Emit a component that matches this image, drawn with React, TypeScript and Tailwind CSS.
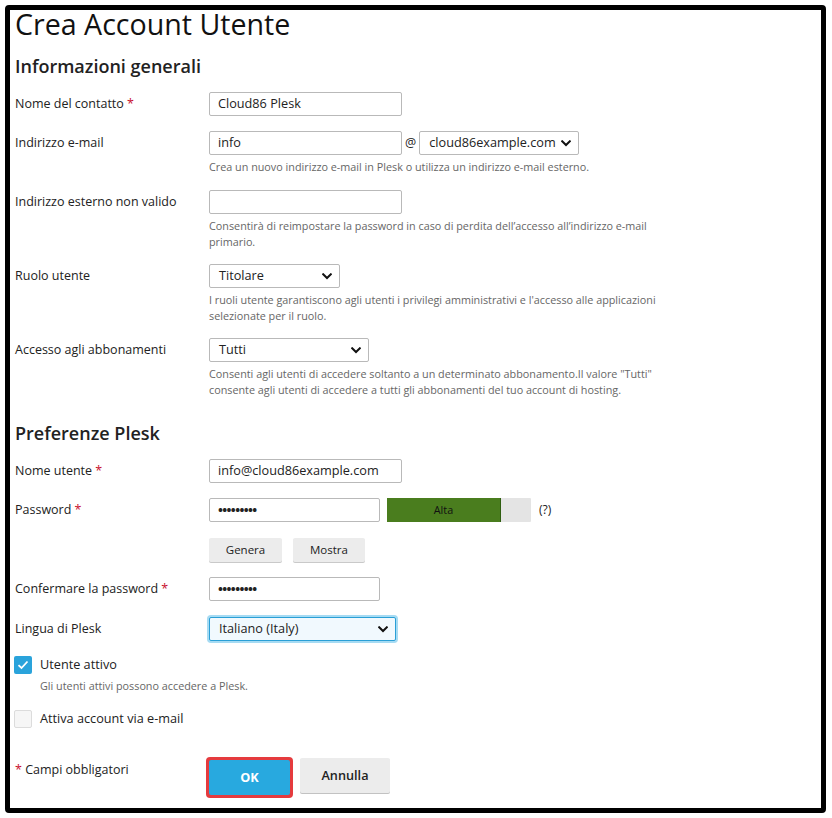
import React from "react";

const font = { fontFamily: '"Open Sans", "Noto Sans", sans-serif' };

function Chevron() {
  return (
    <svg width="10" height="7" viewBox="0 0 10 7" className="shrink-0">
      <path d="M1.2 1.3 L5 5 L8.8 1.3" fill="none" stroke="#111" strokeWidth="2" strokeLinecap="square" />
    </svg>
  );
}

function Req() {
  return <span className="text-[#c8102e]"> *</span>;
}

function Input({ w, value, dots }: { w: string; value?: string; dots?: boolean }) {
  return (
    <div
      className={`${w} h-[24px] border border-[#b9b9b9] rounded-[2px] bg-white flex items-center px-[8px] text-[12.7px] text-[#222] shrink-0`}
    >
      {dots ? <span className="text-[13px] font-bold tracking-[-0.6px] leading-none">•••••••••</span> : value}
    </div>
  );
}

function Select({ w, value }: { w: string; value: string }) {
  return (
    <div
      className={`${w} h-[24px] border border-[#b9b9b9] rounded-[2px] bg-white flex items-center justify-between pl-[9px] pr-[7px] text-[12.7px] text-[#222] shrink-0`}
    >
      <span>{value}</span>
      <Chevron />
    </div>
  );
}

function Help({ children }: { children: React.ReactNode }) {
  return <div className="mt-[4px] text-[10.8px] leading-[16px] text-[#666]">{children}</div>;
}

function Row({
  label,
  children,
  mt,
}: {
  label: React.ReactNode;
  children: React.ReactNode;
  mt: string;
}) {
  return (
    <div className={`flex ${mt}`}>
      <div className="w-[194px] shrink-0 text-[12.5px] leading-[24px] text-[#222]">{label}</div>
      <div className="flex flex-col">{children}</div>
    </div>
  );
}

export default function App() {
  return (
    <div className="w-[832px] h-[818px] bg-white pt-[5px] pl-[5px]" style={font}>
      <div className="w-[821px] h-[808px] border-[5px] border-black rounded-[4px] pl-[5px]">
        <h1 className="text-[28.6px] leading-[27px] text-[#111] font-normal">Crea Account Utente</h1>
        <h2 className="mt-[18px] text-[18px] leading-[22px] font-semibold text-[#222]">Informazioni generali</h2>

        <Row label={<>Nome del contatto<Req /></>} mt="mt-[15px]">
          <Input w="w-[193px]" value="Cloud86 Plesk" />
        </Row>

        <Row label="Indirizzo e-mail" mt="mt-[15px]">
          <div className="flex items-center">
            <Input w="w-[193px]" value="info" />
            <span className="mx-[3px] text-[12.5px] text-[#222]">@</span>
            <Select w="w-[160px]" value="cloud86example.com" />
          </div>
          <Help>Crea un nuovo indirizzo e-mail in Plesk o utilizza un indirizzo e-mail esterno.</Help>
        </Row>

        <Row label="Indirizzo esterno non valido" mt="mt-[15px]">
          <Input w="w-[193px]" value="" />
          <Help>
            Consentirà di reimpostare la password in caso di perdita dell’accesso all’indirizzo e-mail
            <br />
            primario.
          </Help>
        </Row>

        <Row label="Ruolo utente" mt="mt-[14px]">
          <Select w="w-[131px]" value="Titolare" />
          <Help>
            I ruoli utente garantiscono agli utenti i privilegi amministrativi e l'accesso alle applicazioni
            <br />
            selezionate per il ruolo.
          </Help>
        </Row>

        <Row label="Accesso agli abbonamenti" mt="mt-[14px]">
          <Select w="w-[160px]" value="Tutti" />
          <Help>
            Consenti agli utenti di accedere soltanto a un determinato abbonamento.Il valore "Tutti"
            <br />
            consente agli utenti di accedere a tutti gli abbonamenti del tuo account di hosting.
          </Help>
        </Row>

        <h2 className="mt-[24px] text-[18px] leading-[22px] font-semibold text-[#222]">Preferenze Plesk</h2>

        <Row label={<>Nome utente<Req /></>} mt="mt-[15px]">
          <Input w="w-[193px]" value="info@cloud86example.com" />
        </Row>

        <Row label={<>Password<Req /></>} mt="mt-[15px]">
          <div className="flex items-center">
            <Input w="w-[171px]" dots />
            <div className="ml-[7px] w-[144px] h-[24px] flex bg-[#e4e4e4] rounded-[1px]">
              <div className="w-[114px] h-full bg-[#4a7d1e] border-r border-[#2f5e10] flex items-center justify-center text-[10.8px] text-[#111]">
                Alta
              </div>
            </div>
            <span className="ml-[8px] text-[12px] text-[#222]">(?)</span>
          </div>
          <div className="flex gap-[11px] mt-[16px]">
            <button className="w-[73px] h-[24px] bg-[#ececec] rounded-[2px] shadow-[0_1px_0_#c9c9c9] text-[11.5px] font-medium text-[#222]">
              Genera
            </button>
            <button className="w-[72px] h-[24px] bg-[#ececec] rounded-[2px] shadow-[0_1px_0_#c9c9c9] text-[11.5px] font-medium text-[#222]">
              Mostra
            </button>
          </div>
        </Row>

        <Row label={<>Confermare la password<Req /></>} mt="mt-[15px]">
          <Input w="w-[171px]" dots />
        </Row>

        <Row label="Lingua di Plesk" mt="mt-[16px]">
          <div className="w-[187px] h-[24px] border border-[#2a9fd6] rounded-[2px] bg-[#f1f9fe] shadow-[0_0_0_2px_#a6dbf3] flex items-center justify-between pl-[9px] pr-[7px] text-[12.7px] text-[#222]">
            <span>Italiano (Italy)</span>
            <Chevron />
          </div>
        </Row>

        <div className="mt-[14px] flex items-center -ml-[1px]">
          <div className="w-[18px] h-[18px] rounded-[2px] bg-[#2aa3db] flex items-center justify-center">
            <svg width="12" height="10" viewBox="0 0 12 10">
              <path d="M1.5 5.2 L4.5 8 L10.5 1.5" fill="none" stroke="white" strokeWidth="1.8" />
            </svg>
          </div>
          <span className="ml-[8px] text-[12.7px] text-[#222]">Utente attivo</span>
        </div>
        <div className="ml-[25px] mt-[4px] text-[10.8px] leading-[16px] text-[#666]">Gli utenti attivi possono accedere a Plesk.</div>

        <div className="mt-[15px] flex items-center -ml-[1px]">
          <div className="w-[18px] h-[18px] rounded-[2px] bg-[#f6f6f6] border border-[#dcdcdc]" />
          <span className="ml-[8px] text-[12.7px] text-[#222]">Attiva account via e-mail</span>
        </div>

        <div className="mt-[29px] flex">
          <div className="w-[191px] pt-[4px] text-[12.5px] text-[#222]">
            <span className="text-[#c8102e]">*</span> Campi obbligatori
          </div>
          <div className="w-[87px] h-[41px] rounded-[4px] bg-[#e53b3e] p-[3px]">
            <button className="w-full h-full bg-[#28a9df] rounded-[2px] text-[12.7px] font-bold text-white">OK</button>
          </div>
          <button className="ml-[7px] mt-[1px] w-[90px] h-[35px] bg-[#ececec] rounded-[2px] shadow-[0_1px_0_#c2c2c2] text-[12.7px] font-semibold text-[#222]">
            Annulla
          </button>
        </div>
      </div>
    </div>
  );
}
